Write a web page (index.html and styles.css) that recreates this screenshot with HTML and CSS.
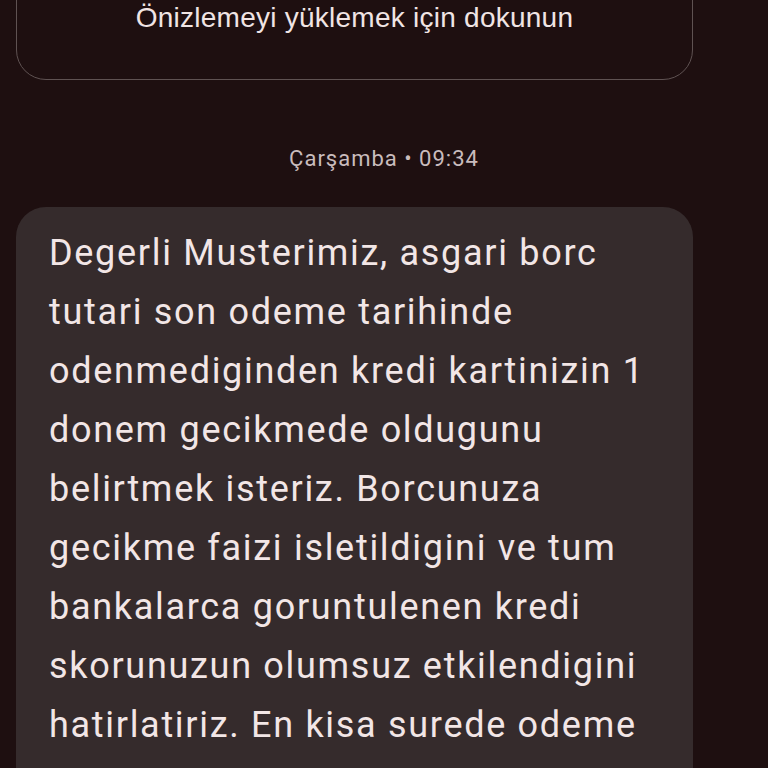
FILE: index.html
```html
<!DOCTYPE html>
<html lang="tr">
<head>
<meta charset="utf-8">
<link rel="stylesheet" href="styles.css">
</head>
<body>
<div class="thread">
  <div class="preview-card">
    <span class="preview-text">Önizlemeyi yüklemek için dokunun</span>
  </div>
  <div class="date-sep">Çarşamba • 09:34</div>
  <div class="bubble">
    <p class="msg">Degerli Musterimiz, asgari borc<br>tutari son odeme tarihinde<br>odenmediginden kredi kartinizin 1<br>donem gecikmede oldugunu<br>belirtmek isteriz. Borcunuza<br>gecikme faizi isletildigini ve tum<br>bankalarca goruntulenen kredi<br>skorunuzun olumsuz etkilendigini<br>hatirlatiriz. En kisa surede odeme<br>yapmanizi rica ederiz.</p>
  </div>
</div>
</body>
</html>
```
FILE: styles.css
```css
html, body {
  margin: 0;
  padding: 0;
  background: #1e0f10;
  height: 100%;
  overflow: hidden;
}
body {
  font-family: Roboto, "Noto Sans", sans-serif;
  color: #f2e6e6;
}
.thread {
  display: flex;
  flex-direction: column;
  padding: 0 75px 0 16px;
}
.preview-card {
  margin-top: -60px;
  height: 140px;
  border: 1.5px solid #5f5252;
  border-radius: 30px;
  display: flex;
  justify-content: center;
  align-items: flex-start;
  padding-top: 62px;
  box-sizing: border-box;
}
.preview-text {
  font-family: "Liberation Sans", Arial, sans-serif;
  font-size: 28px;
  line-height: 30px;
  letter-spacing: 0.25px;
  color: #f0e4e4;
}
.date-sep {
  margin: 66px -75px 0 -16px;
  text-align: center;
  font-size: 22px;
  line-height: 26px;
  color: #c9bcbd;
  letter-spacing: 1px;
}
.bubble {
  margin-top: 35px;
  background: #352b2c;
  border-radius: 30px;
  padding: 17px 32px 20px 33px;
}
.msg {
  margin: 0;
  font-size: 36px;
  line-height: 59px;
  letter-spacing: 1.7px;
  color: #f2e6e6;
}
```
